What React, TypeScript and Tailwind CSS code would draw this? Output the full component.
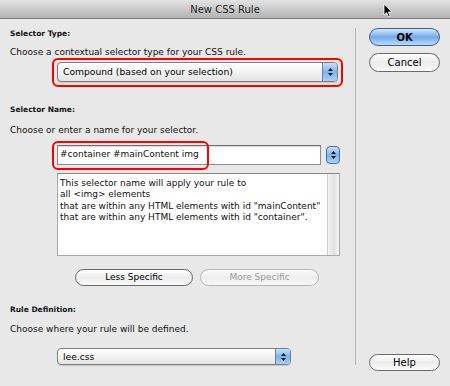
const font = { fontFamily: '"DejaVu Sans", "Liberation Sans", sans-serif' };

function StepperCap({ className = "" }: { className?: string }) {
  return (
    <div
      className={`flex flex-col items-center justify-center gap-[2px] bg-gradient-to-b from-[#c9e0f8] via-[#7fb3ec] to-[#a9d0f7] ${className}`}
    >
      <svg width="5" height="3" viewBox="0 0 5 3">
        <path d="M2.5 0 L5 3 L0 3 Z" fill="#1a1a1a" />
      </svg>
      <svg width="5" height="3" viewBox="0 0 5 3">
        <path d="M0 0 L5 0 L2.5 3 Z" fill="#1a1a1a" />
      </svg>
    </div>
  );
}

function Popup({ label, className }: { label: string; className: string }) {
  return (
    <div
      className={`flex overflow-hidden rounded-[4px] border border-[#7d7d7d] bg-gradient-to-b from-white via-[#f2f2f2] to-[#e4e4e4] shadow-[0_1px_1px_rgba(0,0,0,0.15)] ${className}`}
    >
      <div className="flex flex-1 items-center pl-[5px] text-[9.2px] text-black">{label}</div>
      <StepperCap className="w-[15px] border-l border-[#5f86b8]" />
    </div>
  );
}

function AquaButton({
  label,
  className,
  primary = false,
  disabled = false,
}: {
  label: string;
  className: string;
  primary?: boolean;
  disabled?: boolean;
}) {
  const tone = primary
    ? "border-[#3f5f93] bg-gradient-to-b from-[#d5e8fb] via-[#74aaea] to-[#b8dafb] text-black"
    : disabled
      ? "border-[#b5b5b5] bg-gradient-to-b from-[#fafafa] via-[#eeeeee] to-[#f7f7f7] text-[#9a9a9a]"
      : "border-[#6a6a6a] bg-gradient-to-b from-white via-[#ececec] to-[#fafafa] text-black";
  return (
    <div className={`flex items-center justify-center rounded-full border ${tone} ${className}`}>
      {label}
    </div>
  );
}

export default function App() {
  return (
    <div style={font} className="relative flex h-[386px] w-[450px] flex-col overflow-hidden bg-[#e8e8e8]">
      <div className="flex h-[19px] items-center justify-center border-b border-[#7c7c7c] bg-gradient-to-b from-[#e3e3e3] to-[#b3b3b3] text-[10px] text-[#1e1e1e]">
        New CSS Rule
      </div>

      <div className="flex flex-1">
        <div className="w-[355px] pl-[10px] pt-[8px] text-[#111]">
          <p className="text-[7.5px] font-bold leading-[14px]">Selector Type:</p>
          <p className="mt-[4px] text-[9px] leading-[14px]">Choose a contextual selector type for your CSS rule.</p>
          <div className="ml-[42px] mt-[-1px] h-[29px] w-[291px] rounded-[6px] border-2 border-[#ff0000] pl-[3px] pt-[2px]">
            <Popup label="Compound (based on your selection)" className="h-[20px] w-[281px]" />
          </div>

          <p className="mt-[16px] text-[7.5px] font-bold leading-[14px]">Selector Name:</p>
          <p className="mt-[6px] text-[9px] leading-[14px]">Choose or enter a name for your selector.</p>
          <div className="mt-[8px] flex">
            <div className="relative ml-[47px] flex h-[20px] w-[264px] items-center border border-[#8e8e8e] border-t-[#6e6e6e] bg-white pl-[2px] text-[9px] shadow-[inset_0_1px_1px_rgba(0,0,0,0.15)]">
              #container #mainContent img
              <div className="absolute left-[-6px] top-[-5px] h-[29px] w-[157px] rounded-[6px] border-2 border-[#ff0000]" />
            </div>
            <StepperCap className="ml-[5px] mt-[1px] h-[18px] w-[14px] rounded-[4px] border border-[#4d6f9e]" />
          </div>

          <div className="ml-[47px] mt-[8px] flex h-[83px] w-[283px] border border-[#a9a9a9] border-t-[#878787] bg-white">
            <div className="flex-1 whitespace-nowrap pl-[2px] pt-[4px] text-[9px] leading-[11.3px]">
              <p>This selector name will apply your rule to</p>
              <p>all &lt;img&gt; elements</p>
              <p>that are within any HTML elements with id "mainContent"</p>
              <p>that are within any HTML elements with id "container".</p>
            </div>
            <div className="w-[12px] border-l border-[#cfcfcf] bg-gradient-to-r from-[#f4f4f4] via-[#e2e2e2] to-[#f4f4f4]" />
          </div>

          <div className="mt-[13px] flex text-[9px]">
            <AquaButton label="Less Specific" className="ml-[65px] h-[17px] w-[118px]" />
            <AquaButton label="More Specific" disabled className="ml-[7px] h-[17px] w-[119px]" />
          </div>

          <p className="mt-[17px] text-[7.5px] font-bold leading-[14px]">Rule Definition:</p>
          <p className="mt-[5px] text-[9px] leading-[14px]">Choose where your rule will be defined.</p>
          <Popup label="lee.css" className="ml-[47px] mt-[12px] h-[17px] w-[234px]" />
        </div>

        <div className="mt-[9px] h-[337px] w-px bg-[#b5b5b5]" />

        <div className="ml-[13px] flex flex-col pb-[15px] pt-[9px] text-[10px]">
          <AquaButton label="OK" primary className="h-[18px] w-[71px] font-bold" />
          <AquaButton label="Cancel" className="mt-[7px] h-[19px] w-[71px]" />
          <AquaButton label="Help" className="mt-auto h-[17px] w-[71px]" />
        </div>
      </div>

      <svg className="absolute left-[383px] top-[3px]" width="10" height="15" viewBox="0 0 10 15">
        <path d="M1 1 L1 12 L3.6 9.6 L5.6 14 L7.2 13.3 L5.3 9 L8.8 9 Z" fill="#000" stroke="#fff" strokeWidth="0.8" />
      </svg>
    </div>
  );
}
